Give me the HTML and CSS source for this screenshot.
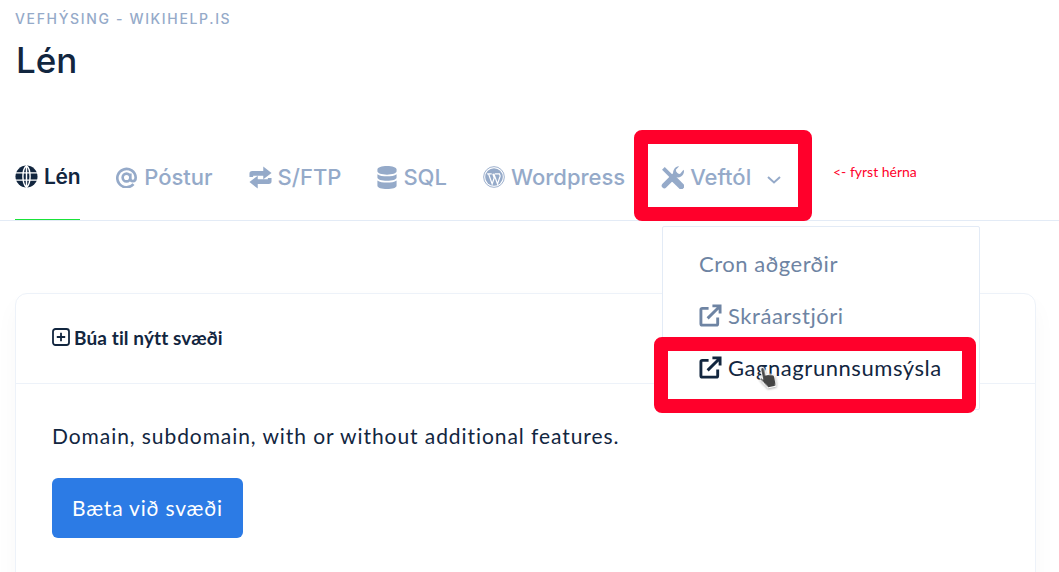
FILE: index.html
```html
<!DOCTYPE html>
<html lang="en">
<head>
  <meta charset="UTF-8">
  <meta name="viewport" content="width=device-width, initial-scale=1.0">
  <title>Lén</title>
  <link rel="stylesheet" href="styles.css">
</head>
<body>
  <!-- haus -->
  <header class="page-header">
    <div class="eyebrow">VEFHÝSING - WIKIHELP.IS</div>
    <h1>Lén</h1>
  </header>

  <!-- flipar -->
  <nav class="tabs">
    <a class="tab active">
      <svg class="tab-icon" viewBox="0 0 24 24"><circle cx="12" cy="12" r="11.5" fill="currentColor"/><path d="M0 8.2h24M0 15.800h24M12 0v24M12 .5C7 5 7 19 12 23.500M12 .5c5 4.500 5 18.500 0 23" fill="none" stroke="#fff" stroke-width="1.500"/></svg>
      Lén
    </a>
    <a class="tab">
      <svg class="tab-icon at" viewBox="0 0 24 24"><path d="M20 19.500A10.500 10.500 0 1 1 22.500 12c0 2.600-1.300 4.200-3.200 4.200-1.800 0-2.900-1.300-2.900-3V7.500M16.400 12a4.400 4.400 0 1 1-8.800 0 4.400 4.400 0 0 1 8.800 0z" fill="none" stroke="currentColor" stroke-width="3"/></svg>
      Póstur
    </a>
    <a class="tab">
      <svg class="tab-icon" viewBox="0 0 24 25"><path d="M0 12V8.500C0 6.500 1 5.500 3 5.500H15V.5l9 7-9 7v-4H4V12zM24 13v3.500c0 2-1 3-3 3H9v5l-9-7 9-7v4H20V13z" fill="currentColor"/></svg>
      S/FTP
    </a>
    <a class="tab">
      <svg class="tab-icon db" viewBox="0 0 20 24"><path d="M0 3.500C0 1.500 4.500 0 10 0s10 1.500 10 3.500v2C20 7.500 15.500 9 10 9S0 7.500 0 5.500zM0 8.500C2 10 6 10.800 10 10.800s8-.8 10-2.300V12c0 2-4.500 3.500-10 3.500S0 14 0 12zM0 15c2 1.500 6 2.300 10 2.300s8-.8 10-2.300v5.500c0 2-4.500 3.500-10 3.500S0 22.500 0 20.500z" fill="currentColor"/></svg>
      SQL
    </a>
    <a class="tab">
      <svg class="tab-icon wp" viewBox="0 0 24 24"><circle cx="12" cy="12" r="11.300" fill="none" stroke="currentColor" stroke-width="1"/><circle cx="12" cy="12" r="9.600" fill="currentColor"/><path d="M4.500 8.500h5M13 8.500h5.500M6 8.500l4 11 2.200-6.500-1.500-4.500M11.800 8.500l4 11 2.800-8c.3-1 0-2-.8-3" fill="none" stroke="#fff" stroke-width="1.300"/></svg>
      Wordpress
    </a>
    <a class="tab">
      <svg class="tab-icon" viewBox="0 0 24 24">
        <path d="M2.500 2.500L13 13" stroke="currentColor" stroke-width="4"/>
        <path d="M13.500 13.500L21 21" stroke="currentColor" stroke-width="6.500" stroke-linecap="round"/>
        <path d="M3.500 20.500L15 9" stroke="currentColor" stroke-width="5.500" stroke-linecap="round"/>
        <path d="M24 5.500a6.500 6.500 0 0 1-9.500 5.800 6.500 6.500 0 0 1 4.500-11L15.500 4l.8 3.500 3.500.8L23.500 4c.3.500.5 1 .5 1.500z" fill="currentColor"/>
      </svg>
      Veftól
      <svg class="caret" viewBox="0 0 14 8"><path d="M1 1l6 5.500L13 1" fill="none" stroke="currentColor" stroke-width="2"/></svg>
    </a>
  </nav>

  <!-- spjald -->
  <section class="card">
    <div class="card-header">
      <svg class="plus-icon" viewBox="0 0 18 18"><rect x="1" y="1" width="16" height="16" rx="2.500" fill="none" stroke="currentColor" stroke-width="1.800"/><path d="M9 4.800v8.400M4.800 9h8.400" stroke="currentColor" stroke-width="1.800"/></svg>
      <span>Búa til nýtt svæði</span>
    </div>
    <div class="card-body">
      <p>Domain, subdomain, with or without additional features.</p>
      <a class="btn">Bæta við svæði</a>
    </div>
  </section>

  <!-- valmynd -->
  <div class="dropdown">
    <a class="dropdown-item">Cron aðgerðir</a>
    <a class="dropdown-item">
      <svg class="ext-icon" viewBox="0 0 24 24"><path d="M10 4.500H3.500A1.500 1.500 0 0 0 2 6v14.500A1.500 1.500 0 0 0 3.500 22H18a1.500 1.500 0 0 0 1.500-1.500V14M9 15L22 2M14 2h8v8" fill="none" stroke="currentColor" stroke-width="3"/></svg>
      Skráarstjóri
    </a>
    <a class="dropdown-item current">
      <svg class="ext-icon" viewBox="0 0 24 24"><path d="M10 4.500H3.500A1.500 1.500 0 0 0 2 6v14.500A1.500 1.500 0 0 0 3.500 22H18a1.500 1.500 0 0 0 1.500-1.500V14M9 15L22 2M14 2h8v8" fill="none" stroke="currentColor" stroke-width="3"/></svg>
      Gagnagrunnsumsýsla
    </a>
  </div>

  <!-- merkingar ofan a skjamynd -->
  <div class="mark mark-tools"></div>
  <div class="mark mark-item"></div>
  <div class="note">&lt;- fyrst hérna</div>
  <svg class="hand" viewBox="0 0 18 24"><path d="M5 1.500c1 0 1.800.8 1.800 1.800V9l1-.2 1 .2 1 .3 1.200.1 1.500.5 1.500.8c.8.600 1 1.500 1 2.500v4.500l-1 3.800H6.500L2.500 15 1 12.500c-.5-1 .5-2 1.500-1.500L3.300 12V3.300C3.300 2.300 4 1.500 5 1.500z" fill="#444" stroke="#fff" stroke-width="1"/></svg>
</body>
</html>
```

FILE: styles.css
```css
* {
  box-sizing: border-box;
}

html, body {
  height: 572px;
  overflow: hidden;
}

body {
  margin: 0;
  position: relative;
  background-color: #fff;
  color: #12263f;
  font-family: 'Lato', 'Inter', sans-serif;
}

.page-header {
  padding: 11px 16px 0 15px;
  height: 127px;
}

.eyebrow {
  font-family: 'Inter', sans-serif;
  font-size: 14px;
  line-height: 15px;
  font-weight: 500;
  letter-spacing: 1.650px;
  color: #95aac9;
}

h1 {
  margin: 10px 0 0 1px;
  font-family: 'Inter', sans-serif;
  font-size: 35px;
  line-height: 48px;
  font-weight: 500;
}

.tabs {
  display: flex;
  padding-left: 15px;
  height: 94px;
  border-bottom: 1px solid #e3ebf6;
  gap: 36px;
}

.tab {
  display: flex;
  align-items: center;
  gap: 6px;
  height: 93px;
  padding-top: 7px;
  font-family: 'Inter', sans-serif;
  font-size: 22px;
  font-weight: 500;
  color: #95aac9;
}

.tab.active {
  color: #12263f;
  border-bottom: 1px solid #19e339;
  font-size: 21px;
  font-weight: 600;
  letter-spacing: -0.3px;
}

.tab-icon {
  width: 23px;
  height: 23px;
  flex: none;
}

.tab-icon.at {
  width: 21px;
  height: 21px;
  margin-right: 1px;
}

.tab-icon.db {
  width: 20px;
}

.tab-icon.wp {
  width: 22px;
  height: 22px;
}

.caret {
  width: 14px;
  height: 8px;
  margin-left: 10px;
  margin-top: 5px;
}

.card {
  margin: 72px 23px 0 15px;
  height: 300px;
  border: 1px solid #edf2f9;
  border-radius: 12px;
  box-shadow: 0 12px 24px rgba(18, 38, 63, 0.03);
}

.card-header {
  display: flex;
  align-items: center;
  gap: 4px;
  height: 90px;
  padding: 0 0 3px 36px;
  border-bottom: 1px solid #edf2f9;
  font-size: 19px;
  font-weight: 700;
  letter-spacing: 0.1px;
}

.plus-icon {
  width: 18px;
  height: 18px;
}

.card-body {
  padding: 39px 36px;
}

.card-body p {
  margin: 0 0 29px;
  font-size: 21px;
  line-height: 26px;
  letter-spacing: 0.93px;
}

.btn {
  display: inline-block;
  padding: 0 20px;
  height: 60px;
  line-height: 60px;
  border-radius: 6px;
  background-color: #2c7be5;
  color: #fff;
  font-size: 21px;
  letter-spacing: 0.8px;
}

.dropdown {
  position: absolute;
  left: 662px;
  top: 226px;
  width: 318px;
  height: 184px;
  padding: 10px 36px;
  background-color: #fff;
  border: 1px solid #e3ebf6;
  border-radius: 2px;
}

.dropdown-item {
  display: flex;
  align-items: center;
  gap: 6px;
  height: 52px;
  font-size: 22px;
  letter-spacing: 0.55px;
  color: #6e84a3;
}

.dropdown-item.current {
  color: #12263f;
}

.ext-icon {
  width: 23px;
  height: 23px;
  flex: none;
}

.mark {
  position: absolute;
  border: 14px solid #ff002b;
  border-radius: 8px;
}

.mark-tools {
  left: 634px;
  top: 130px;
  width: 178px;
  height: 91px;
}

.mark-item {
  left: 654px;
  top: 337px;
  width: 322px;
  height: 76px;
}

.note {
  position: absolute;
  left: 833px;
  top: 163px;
  font-size: 14px;
  line-height: 17px;
  color: #ff002b;
}

.hand {
  position: absolute;
  left: 759px;
  top: 365px;
  width: 19px;
  height: 25px;
  transform: rotate(-12deg);
  filter: drop-shadow(0 1px 1px rgba(0, 0, 0, 0.35));
}
```
